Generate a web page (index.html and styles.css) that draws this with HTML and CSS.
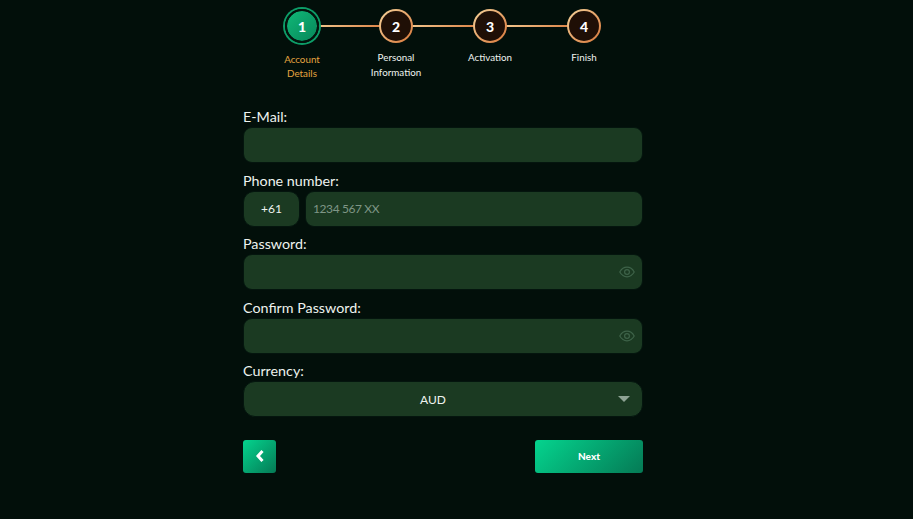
FILE: index.html
```html
<!DOCTYPE html>
<html lang="en">
<head>
  <meta charset="UTF-8" />
  <meta name="viewport" content="width=device-width, initial-scale=1" />
  <title>Register</title>
  <link rel="stylesheet" href="styles.css">
</head>
<body>

  <!-- STEPS -->
  <ol class="steps">
    <li class="step active">
      <span class="step-circle">1</span>
      <span class="step-label">Account<br>Details</span>
    </li>
    <li class="step">
      <span class="step-circle">2</span>
      <span class="step-label">Personal<br>Information</span>
    </li>
    <li class="step">
      <span class="step-circle">3</span>
      <span class="step-label">Activation</span>
    </li>
    <li class="step">
      <span class="step-circle">4</span>
      <span class="step-label">Finish</span>
    </li>
  </ol>

  <!-- FORM -->
  <form class="signup">
    <div class="field">
      <label for="email">E-Mail:</label>
      <input type="text" id="email" class="input">
    </div>

    <div class="field">
      <label for="phone">Phone number:</label>
      <div class="phone-row">
        <div class="prefix">+61</div>
        <input type="text" id="phone" class="input" placeholder="1234 567 XX">
      </div>
    </div>

    <div class="field">
      <label for="password">Password:</label>
      <div class="input-wrap">
        <input type="password" id="password" class="input">
        <svg class="eye" viewBox="0 0 16 12" width="16" height="12" aria-hidden="true">
          <path d="M.8 6C2.6 2.8 5 1.2 8 1.2s5.400 1.600 7.200 4.800C13.400 9.200 11 10.800 8 10.800S2.600 9.200.8 6z" />
          <circle cx="8" cy="6" r="2.400" />
        </svg>
      </div>
    </div>

    <div class="field">
      <label for="confirm">Confirm Password:</label>
      <div class="input-wrap">
        <input type="password" id="confirm" class="input">
        <svg class="eye" viewBox="0 0 16 12" width="16" height="12" aria-hidden="true">
          <path d="M.8 6C2.600 2.800 5 1.200 8 1.200s5.400 1.600 7.200 4.800C13.400 9.200 11 10.800 8 10.800S2.600 9.200.8 6z" />
          <circle cx="8" cy="6" r="2.400" />
        </svg>
      </div>
    </div>

    <div class="field">
      <label>Currency:</label>
      <div class="select">
        AUD
        <span class="caret"></span>
      </div>
    </div>

    <div class="actions">
      <button type="button" class="btn back">
        <svg viewBox="0 0 10 14" width="10" height="14" aria-hidden="true">
          <path d="M7.500 2 3 7l4.500 5" />
        </svg>
      </button>
      <button type="button" class="btn next">Next</button>
    </div>
  </form>

</body>
</html>
```

FILE: styles.css
```css
/* RESET */
* {
  margin: 0;
  padding: 0;
  box-sizing: border-box;
}

html, body {
  width: 100%;
  height: 100%;
  overflow: hidden;
  font-family: 'Lato', 'Open Sans', sans-serif;
}

body {
  padding-right: 27px;
  background: #020f0a;
  color: #eef3ef;
}

/* STEPS */
.steps {
  list-style: none;
  display: flex;
  justify-content: center;
  width: 376px;
  margin: 0 auto;
  padding-top: 7px;
}

.step {
  position: relative;
  flex: 1;
  display: flex;
  flex-direction: column;
  align-items: center;
}

.step:not(:last-child)::after {
  content: '';
  position: absolute;
  top: 18px;
  left: 50%;
  width: 100%;
  height: 2px;
  background: linear-gradient(90deg, #f6d49c, #d8773a);
}

.step-circle {
  position: relative;
  z-index: 1;
  width: 34px;
  height: 34px;
  margin: 2px 0;
  display: flex;
  align-items: center;
  justify-content: center;
  border-radius: 50%;
  border: 2px solid transparent;
  background:
    linear-gradient(#1f0f06, #1f0f06) padding-box,
    linear-gradient(135deg, #f6d49c, #d8773a) border-box;
  color: #fff;
  font-size: 14px;
  font-weight: 900;
}

.step.active .step-circle {
  background: linear-gradient(135deg, #10b878, #07875a) padding-box;
  border: 2px solid #03140d;
  box-shadow: 0 0 0 2px #0d9d68;
}

.step-label {
  margin-top: 5px;
  font-size: 9.800px;
  line-height: 14.500px;
  text-align: center;
  color: #eef3ef;
}

.step.active .step-label {
  margin-top: 7px;
  line-height: 14px;
  color: #e5a540;
}

/* FORM */
.signup {
  width: 400px;
  margin: 0 auto;
  padding-top: 26px;
}

.field {
  margin-bottom: 6.500px;
}

.field label {
  display: block;
  height: 21px;
  font-size: 14.300px;
  line-height: 21px;
}

.input {
  width: 100%;
  height: 36px;
  padding: 0 7px;
  background: #1b3a22;
  border: 1px solid #04150e;
  border-radius: 9px;
  outline: none;
  color: #fff;
  font-family: inherit;
  font-size: 12px;
  letter-spacing: -0.4px;
}

.input::placeholder {
  color: #7f9686;
}

.phone-row {
  display: flex;
  gap: 5px;
}

.prefix {
  flex: 0 0 57px;
  height: 36px;
  display: flex;
  align-items: center;
  justify-content: center;
  background: #1b3a22;
  border: 1px solid #04150e;
  border-radius: 11px;
  font-size: 12px;
}

.input-wrap {
  position: relative;
}

.eye {
  position: absolute;
  top: 12px;
  right: 8px;
  fill: none;
  stroke: #3e6349;
  stroke-width: 1.200;
}

.select {
  position: relative;
  height: 36px;
  padding-right: 20px;
  display: flex;
  align-items: center;
  justify-content: center;
  background: #1b3a22;
  border: 1px solid #04150e;
  border-radius: 12px;
  font-size: 12px;
}

.caret {
  position: absolute;
  top: 14px;
  right: 12px;
  border-left: 6px solid transparent;
  border-right: 6px solid transparent;
  border-top: 6px solid #8ea394;
}

/* BUTTONS */
.actions {
  display: flex;
  justify-content: space-between;
  margin-top: 22.500px;
}

.btn {
  height: 33px;
  display: flex;
  align-items: center;
  justify-content: center;
  border: none;
  border-radius: 3px;
  background: linear-gradient(135deg, #04d48e, #057a55);
  color: #fff;
  font-family: inherit;
  font-weight: 900;
  font-size: 10px;
  cursor: pointer;
}

.btn.back {
  width: 33px;
}

.btn.back path {
  fill: none;
  stroke: #fff;
  stroke-width: 3;
}

.btn.next {
  width: 108px;
}
```
